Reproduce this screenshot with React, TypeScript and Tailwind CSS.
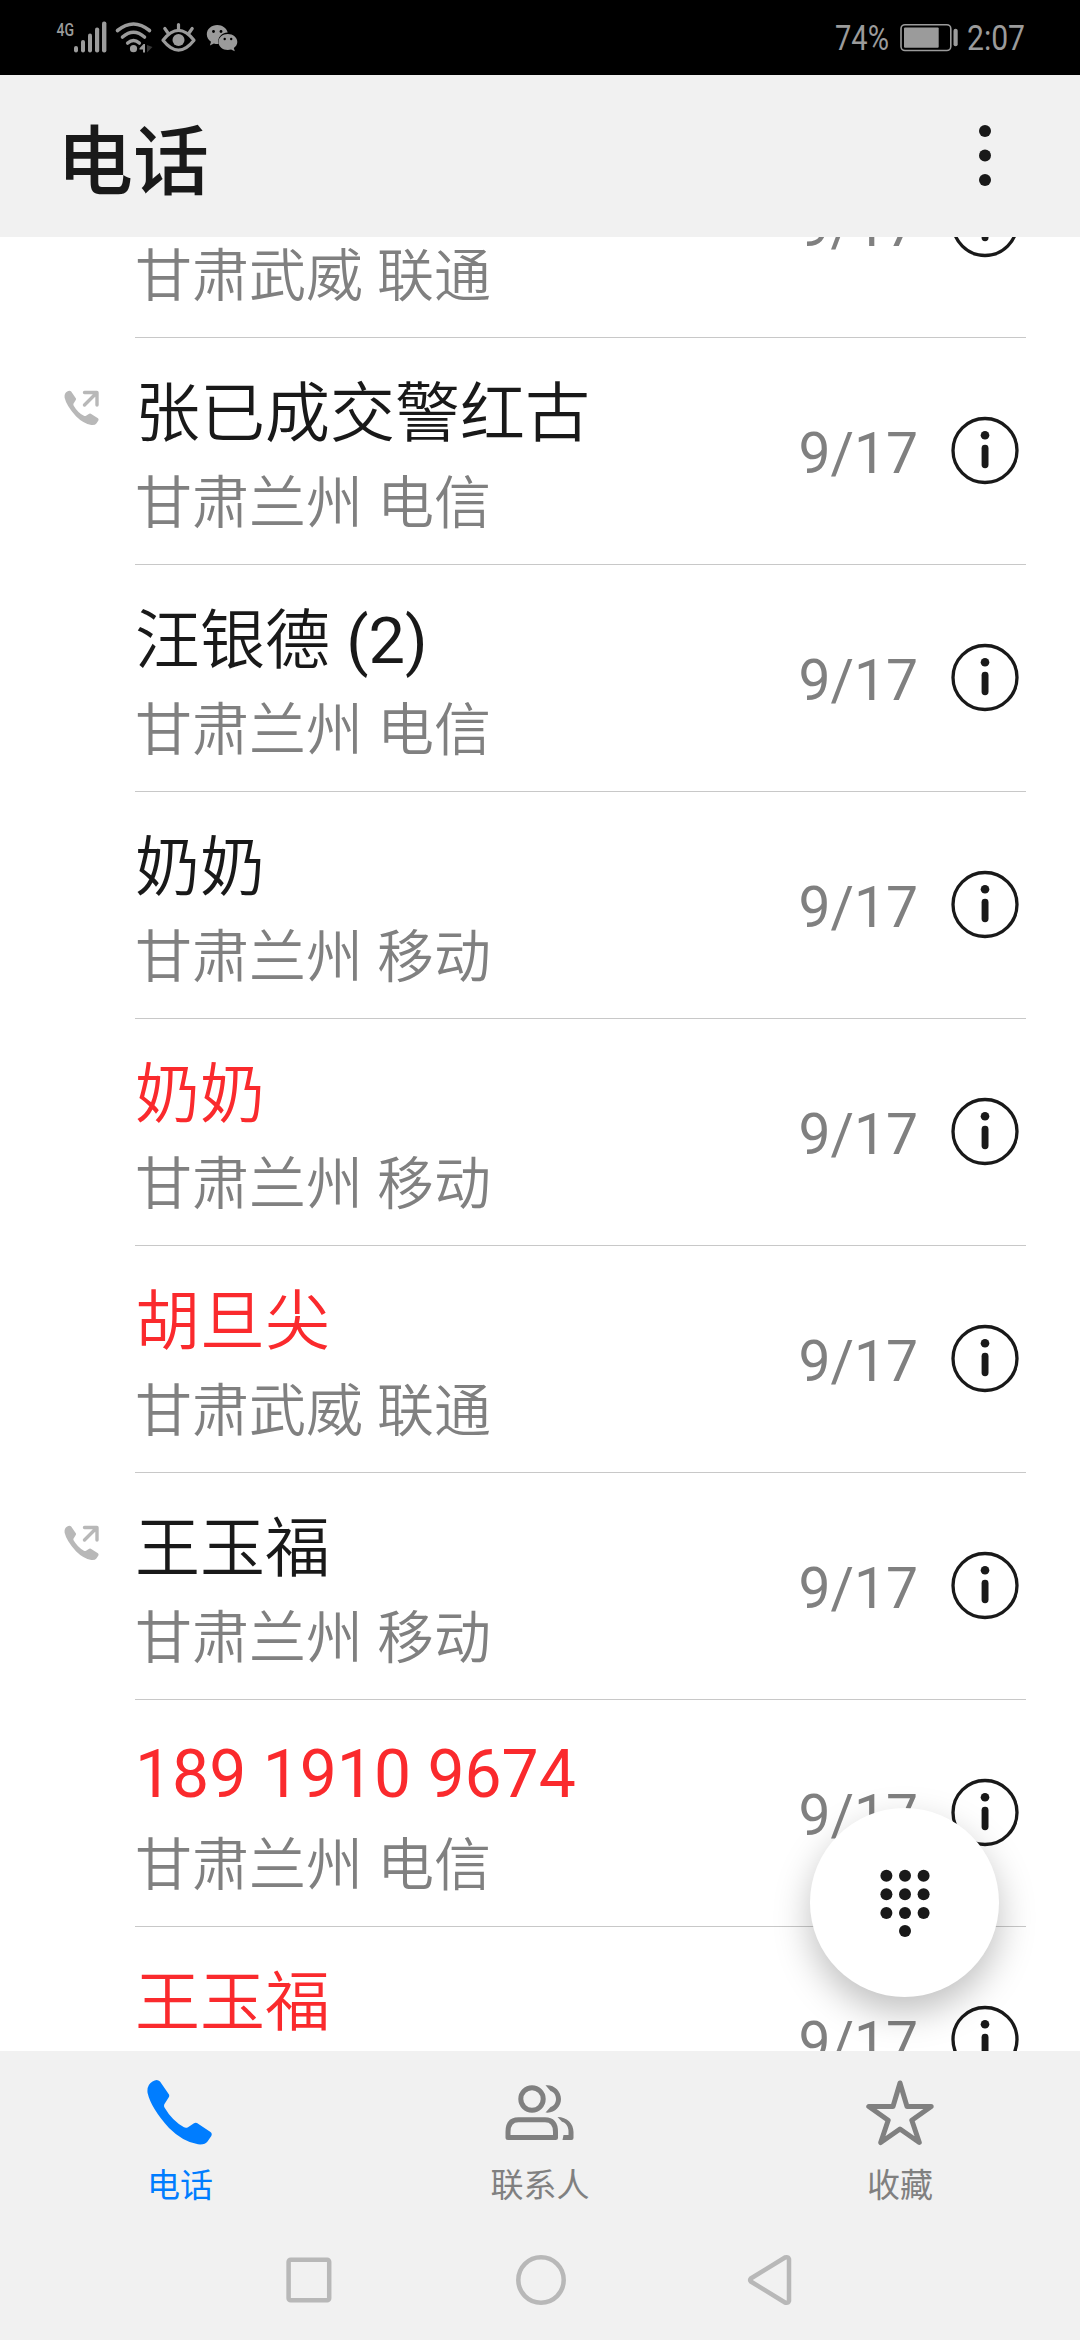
import React from "react";

type Call = { name: string; place: string; missed?: boolean; outgoing?: boolean };

const calls: Call[] = [
  { name: "王玉福", place: "甘肃武威 联通" },
  { name: "张已成交警红古", place: "甘肃兰州 电信", outgoing: true },
  { name: "汪银德 (2)", place: "甘肃兰州 电信" },
  { name: "奶奶", place: "甘肃兰州 移动" },
  { name: "奶奶", place: "甘肃兰州 移动", missed: true },
  { name: "胡旦尖", place: "甘肃武威 联通", missed: true },
  { name: "王玉福", place: "甘肃兰州 移动", outgoing: true },
  { name: "189 1910 9674", place: "甘肃兰州 电信", missed: true },
  { name: "王玉福", place: "甘肃兰州 移动", missed: true },
];

const HANDSET =
  "M5.5 1.5 Q10 -1.5 13 1.5 L22 14.5 Q22.6 16 21.6 17.5 L17.5 24 Q16.6 25.5 17.5 27.5 Q25 40.500 37 47.3 Q39 48.300 41 47.200 L47 43.200 Q48.500 42.300 50 43.100 L63.500 52 Q65.500 53.700 64.300 56 L60.500 61.500 Q58 65 51 64.300 Q36 62 22 48 Q4 28 .6 13 Q-.5 5 5.500 1.500Z";

function StatusBar() {
  return (
    <div className="flex h-[75px] shrink-0 items-center justify-between bg-black pl-[56px] pr-[53px] text-[#9b9b9b]">
      <svg width="184" height="75" viewBox="56 0 184 75" fill="currentColor">
        <text x="56.500" y="35.500" fontSize="19" fontWeight="500" fontFamily="Roboto" textLength="17.500" lengthAdjust="spacingAndGlyphs">4G</text>
        <rect x="74" y="46" width="4" height="6.500" rx="2" />
        <rect x="81" y="40" width="4" height="12.500" rx="2" />
        <rect x="88" y="33.500" width="4" height="19" rx="2" />
        <rect x="95" y="27.500" width="4.200" height="25" rx="2" />
        <rect x="102" y="21.500" width="4.400" height="31" rx="2" />
        <g fill="none" stroke="currentColor" strokeWidth="3.600" strokeLinecap="round">
          <path d="M117.500 30.500 Q133.500 17.500 149.500 30.500" />
          <path d="M122.500 37 Q133.500 27.500 144.500 37" />
          <path d="M127.700 43 Q133.500 38 139.300 43" />
        </g>
        <circle cx="133.500" cy="48.700" r="3.600" />
        <path d="M145 44v8.500h-2v-3h-3.500v-1.300l4-4.200z" />
        <path d="M147 45l5.500 2-5.500 5.500z" opacity=".35" />
        <g fill="none" stroke="currentColor" strokeWidth="3.200" strokeLinecap="round" strokeLinejoin="round">
          <path d="M163 40.300 Q178.500 20.500 194 40.300 Q178.500 60 163 40.300Z" />
          <path d="M178.500 24.500v5M164.800 28.500l3.500 5M192.200 28.500l-3.500 5" />
        </g>
        <circle cx="178.500" cy="40" r="6" />
        <path d="M217.300 25c-5.800 0-10.500 4-10.500 9.300 0 3 1.600 5.700 4.200 7.400l-1.100 3.900 4-2.200c1.200.4 2.300.5 3.600.5h1c-1.500-6 3.200-11.300 9.200-11.300-1-4.400-5.300-7.600-10.400-7.600z" />
        <path d="M227.800 34c-5.200 0-9.300 3.500-9.300 8 0 4.600 4.100 8 9.300 8 1.200 0 2.300-.2 3.300-.5l3.700 1.700-1-3.100c2-1.500 3.500-3.600 3.500-6.100 0-4.500-4.300-8-9.500-8z" />
        <g fill="#000">
          <circle cx="213.500" cy="31.500" r="1.400" /><circle cx="221" cy="31.500" r="1.400" />
          <circle cx="224.700" cy="39" r="1.200" /><circle cx="231.200" cy="39" r="1.200" />
        </g>
      </svg>
      <div className="flex items-center text-[35px] leading-[40px]">
        <span className="w-[55px] origin-left scale-x-[0.83] whitespace-nowrap pt-[2px]">74%</span>
        <svg className="ml-[9px]" width="60" height="30" viewBox="897 23 60 30" fill="currentColor">
          <rect x="899" y="24.700" width="49.800" height="25.800" rx="4" fill="none" stroke="currentColor" strokeWidth="1.600" />
          <rect x="902" y="27.500" width="34.700" height="20.200" rx="1" />
          <rect x="951.500" y="28.800" width="4.200" height="17.400" rx="2" />
        </svg>
        <span className="ml-[8px] w-[60px] origin-left scale-x-[0.86] whitespace-nowrap pt-[2px]">2:07</span>
      </div>
    </div>
  );
}

function InfoIcon() {
  return (
    <svg width="70" height="70" viewBox="0 0 70 70" className="text-[#191919]">
      <circle cx="35" cy="34.500" r="32" fill="none" stroke="currentColor" strokeWidth="3.300" />
      <circle cx="35" cy="19.200" r="4.300" fill="currentColor" />
      <rect x="31.600" y="28.800" width="6.900" height="23.500" rx="3.450" fill="currentColor" />
    </svg>
  );
}

function OutgoingIcon() {
  return (
    <svg width="36" height="36" viewBox="0 0 36 36" className="text-[#b8b8b8]">
      <path d={HANDSET} transform="translate(0.300 0.800) scale(.53)" fill="currentColor" />
      <path d="M20.500 2.500h12.500v12.500M32.500 3L20.500 15" fill="none" stroke="currentColor" strokeWidth="3.400" strokeLinecap="round" strokeLinejoin="round" />
    </svg>
  );
}

function CallName({ text }: { text: string }) {
  if (/^\d/.test(text)) {
    return <div className="pt-px -mb-px text-[66px] leading-[88px]">{text}</div>;
  }
  const [name, count] = text.split(" ");
  return (
    <div className="mt-[2px] -mb-[2px] text-[65px] leading-[88px]">
      <span className="font-[350]">{name}</span>
      {count && <span> {count}</span>}
    </div>
  );
}

function CallRow({ call }: { call: Call }) {
  return (
    <li className="flex h-[227px] shrink-0 pr-[54px]">
      <div className="w-[135px] shrink-0 pl-[64px] pt-[52px]">{call.outgoing && <OutgoingIcon />}</div>
      <div className="flex grow border-b border-[#c8c8c8]">
        <div className="flex grow flex-col whitespace-nowrap pt-[30px]">
          <div className={call.missed ? "text-[#fa2a2d]" : "text-[#191919]"}>
            <CallName text={call.name} />
          </div>
          <div className="mt-[9px] text-[57px] font-[350] leading-[78px] text-[#808080]">{call.place}</div>
        </div>
        <div className="flex items-center pr-[6px]">
          <span className="mr-[32px] pt-[6px] text-[57px] leading-[78px] text-[#808080]">9/17</span>
          <InfoIcon />
        </div>
      </div>
    </li>
  );
}

function DialButton() {
  return (
    <button className="absolute bottom-[54px] right-[81px] flex size-[189px] items-center justify-center rounded-full bg-white shadow-[0_15px_36px_rgba(0,0,0,0.25)]">
      <svg width="50" height="68" viewBox="0 0 50 68" fill="#191919">
        {[6.700, 25.300, 43.900].map((y) => [6.400, 25, 43.600].map((x) => <circle key={`${x}-${y}`} cx={x} cy={y} r="6" />))}
        <circle cx="25" cy="62" r="6" />
      </svg>
    </button>
  );
}

function TabBar() {
  return (
    <nav className="grid h-[161px] grid-cols-3 justify-items-center text-[33px] leading-[44px] text-[#808080]">
      <div className="flex flex-col items-center pt-[29px] text-[#007dff]">
        <svg width="66" height="66" viewBox="0 0 66 66"><path d={HANDSET} fill="currentColor" /></svg>
        <span className="mt-[18px]">电话</span>
      </div>
      <div className="flex flex-col items-center pt-[29px]">
        <svg width="70" height="66" viewBox="0 0 70 66" fill="none" stroke="currentColor" strokeWidth="5" strokeLinejoin="round">
          <circle cx="27" cy="19" r="11.200" />
          <path d="M3 57.500v-5.500Q3 39.800 13.500 39.800H40Q50.500 39.800 50.500 52V57.500H3Z" />
          <path d="M40.500 5.300C49 4.300 56 11 56 19s-7 14.800-15.500 13.500l5-5.400c3.500-1.300 5.500-4.500 5.500-8.100s-2-6.800-5.500-8z" fill="currentColor" stroke="none" />
          <path d="M52.500 37C62 37 68.500 43.500 68.500 52v6q0 2-2 2h-9l1-5h5V51c0-4.500-2.500-8-6.500-9.300z" fill="currentColor" stroke="none" />
        </svg>
        <span className="mt-[18px]">联系人</span>
      </div>
      <div className="flex flex-col items-center pt-[29px]">
        <svg width="70" height="66" viewBox="0 0 70 66" fill="none" stroke="currentColor" strokeWidth="5" strokeLinejoin="round">
          <path d="M35 3L42 26.500H66.200L46.800 40.300L54.300 62.500L35 49L15.700 62.500L23.200 40.300L3.800 26.500H28Z" />
        </svg>
        <span className="mt-[18px]">收藏</span>
      </div>
    </nav>
  );
}

function SystemNav() {
  return (
    <div className="flex h-[128px] items-center justify-between pl-[284px] pr-[283px] pt-[8px] text-[#b8b8b8]">
      <svg width="50" height="52" viewBox="0 0 50 52" fill="none" stroke="currentColor" strokeWidth="4.500">
        <rect x="4.600" y="5.700" width="40.600" height="40.600" rx="2" />
      </svg>
      <svg width="52" height="52" viewBox="0 0 52 52" fill="none" stroke="currentColor" strokeWidth="4.500">
        <circle cx="26" cy="26" r="22.700" />
      </svg>
      <svg width="50" height="52" viewBox="0 0 50 52" fill="none" stroke="currentColor" strokeWidth="4.500" strokeLinejoin="round">
        <path d="M3.800 24.500Q2.500 26 3.800 27.500L38 48.500Q41 49.500 42 47V5Q41 2.500 38 3.500Z" />
      </svg>
    </div>
  );
}

export default function App() {
  return (
    <div className="flex h-[2340px] w-[1080px] flex-col overflow-hidden bg-white font-[Roboto,'Noto_Sans_CJK_SC',sans-serif]">
      <StatusBar />
      <header className="flex h-[162px] shrink-0 items-center justify-between bg-[#f1f1f1] pl-[57px] pr-[88px] text-[#191919]">
        <h1 className="pt-[13px] text-[76px] font-medium leading-[100px]">电话</h1>
        <svg width="14" height="64" viewBox="0 0 14 64" fill="currentColor">
          <circle cx="7" cy="7" r="6" /><circle cx="7" cy="31.500" r="6" /><circle cx="7" cy="56" r="6" />
        </svg>
      </header>
      <main className="relative h-[1814px] shrink-0 overflow-hidden">
        <ul className="-mt-[126px] flex flex-col">
          {calls.map((call, i) => <CallRow key={i} call={call} />)}
        </ul>
        <DialButton />
      </main>
      <footer className="h-[289px] shrink-0 bg-[#f1f1f1]">
        <TabBar />
        <SystemNav />
      </footer>
    </div>
  );
}
